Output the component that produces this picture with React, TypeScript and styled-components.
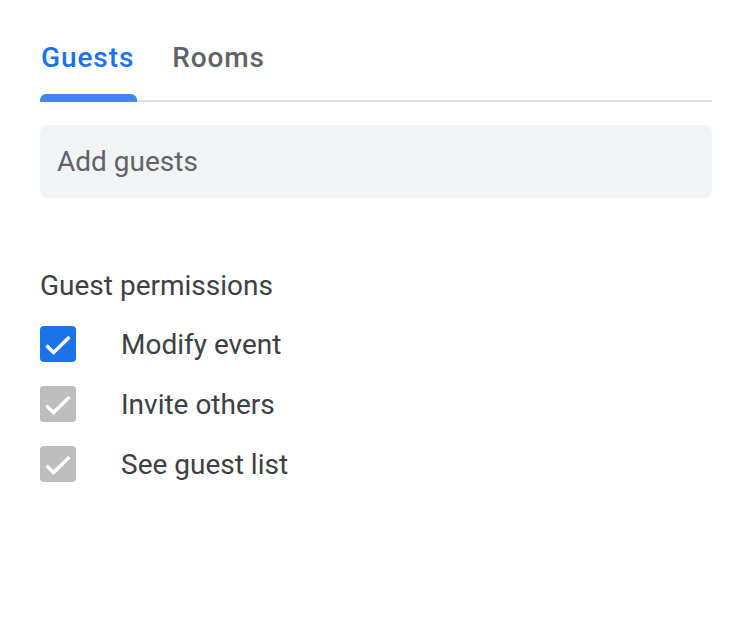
import React from "react";
import styled, { createGlobalStyle } from "styled-components";

const Global = createGlobalStyle`
  html, body { margin: 0; padding: 0; background: #ffffff; }
  body { font-family: Roboto, "Noto Sans", Arial, sans-serif; }
`;

const Page = styled.div`
  width: 740px;
  height: 620px;
  box-sizing: border-box;
  padding: 41px 28px 0 40px;
  display: flex;
  flex-direction: column;
`;

const TabBar = styled.div`
  display: flex;
  gap: 36px;
  border-bottom: 2px solid #e0e0e0;
`;

const Tab = styled.div<{ $active?: boolean }>`
  position: relative;
  padding: 0 1px 26px;
  font-size: 28px;
  line-height: 33px;
  font-weight: 500;
  letter-spacing: 0.9px;
  color: ${(p) => (p.$active ? "#1a73e8" : "#5f6368")};
  &::after {
    content: "";
    display: ${(p) => (p.$active ? "block" : "none")};
    position: absolute;
    left: 0;
    right: -2px;
    bottom: -2px;
    height: 8px;
    background: #4285f4;
    border-radius: 6px 6px 0 0;
  }
`;

const Input = styled.div`
  margin-top: 23px;
  height: 73px;
  background: #f1f3f4;
  border-radius: 8px;
  display: flex;
  align-items: center;
  padding-left: 17px;
  font-size: 28px;
  color: #5f6368;
`;

const SectionTitle = styled.div`
  margin-top: 71px;
  font-size: 28px;
  line-height: 33px;
  color: #3c4043;
`;

const List = styled.div`
  margin-top: 24px;
  display: flex;
  flex-direction: column;
  gap: 24px;
`;

const Row = styled.div`
  display: flex;
  align-items: center;
  gap: 45px;
  font-size: 28px;
  line-height: 33px;
  color: #3c4043;
`;

const Box = styled.div<{ $on?: boolean }>`
  width: 36px;
  height: 36px;
  border-radius: 4px;
  background: ${(p) => (p.$on ? "#1a73e8" : "#bdbdbd")};
  display: flex;
  align-items: center;
  justify-content: center;
`;

const Check = () => (
  <svg width="36" height="36" viewBox="0 0 36 36">
    <path d="M6.5 19.5l7 7L29.5 11" fill="none" stroke="#fff" strokeWidth="3.4" />
  </svg>
);

const items = [
  { label: "Modify event", on: true },
  { label: "Invite others", on: false },
  { label: "See guest list", on: false },
];

export default function App() {
  return (
    <>
      <Global />
      <Page>
        <TabBar>
          <Tab $active>Guests</Tab>
          <Tab>Rooms</Tab>
        </TabBar>
        <Input>Add guests</Input>
        <SectionTitle>Guest permissions</SectionTitle>
        <List>
          {items.map((it) => (
            <Row key={it.label}>
              <Box $on={it.on}>
                <Check />
              </Box>
              {it.label}
            </Row>
          ))}
        </List>
      </Page>
    </>
  );
}
